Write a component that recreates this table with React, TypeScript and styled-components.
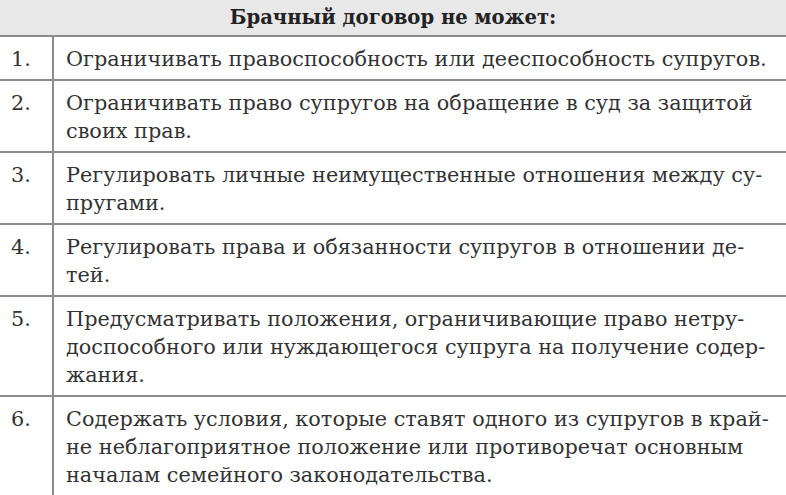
import styled, { createGlobalStyle } from 'styled-components';

const GlobalStyle = createGlobalStyle`
  html, body {
    margin: 0;
    padding: 0;
    background: #ffffff;
  }
  body {
    font-family: 'DejaVu Serif', 'Liberation Serif', serif;
    color: #333333;
  }
`;

const Table = styled.div`
  display: grid;
  grid-template-columns: 54px 1fr;
  width: 786px;
  overflow: hidden;
`;

const Header = styled.div`
  grid-column: 1 / -1;
  height: 35px;
  background: #e8e8e8;
  border-bottom: 2px solid #8c8c8c;
  display: flex;
  align-items: center;
  justify-content: center;
  font-size: 19.6px;
  font-weight: 700;
  color: #222;
`;

const NumCell = styled.div<{ $last?: boolean }>`
  padding: 8px 0 6px 11px;
  border-right: 2px solid #8c8c8c;
  border-bottom: ${({ $last }) => ($last ? 'none' : '2px solid #8c8c8c')};
  font-size: 20.8px;
  line-height: 28px;
`;

const TextCell = styled.div<{ $last?: boolean }>`
  padding: 8px 0 6px 12px;
  border-bottom: ${({ $last }) => ($last ? 'none' : '2px solid #8c8c8c')};
  font-size: 20.8px;
  line-height: 28px;
  white-space: nowrap;
`;

const Line = styled.span`
  display: block;
`;

const rows: string[][] = [
  ['Ограничивать правоспособность или дееспособность супругов.'],
  ['Ограничивать право супругов на обращение в суд за защитой', 'своих прав.'],
  ['Регулировать личные неимущественные отношения между су-', 'пругами.'],
  ['Регулировать права и обязанности супругов в отношении де-', 'тей.'],
  [
    'Предусматривать положения, ограничивающие право нетру-',
    'доспособного или нуждающегося супруга на получение содер-',
    'жания.',
  ],
  [
    'Содержать условия, которые ставят одного из супругов в край-',
    'не неблагоприятное положение или противоречат основным',
    'началам семейного законодательства.',
  ],
];

const App = () => (
  <>
    <GlobalStyle />
    <Table>
      <Header>Брачный договор не может:</Header>
      {rows.map((lines, i) => {
        const last = i === rows.length - 1;
        return [
          <NumCell key={`n${i}`} $last={last}>
            {i + 1}.
          </NumCell>,
          <TextCell key={`t${i}`} $last={last}>
            {lines.map(l => (
              <Line key={l}>{l}</Line>
            ))}
          </TextCell>,
        ];
      })}
    </Table>
  </>
);

export default App;
